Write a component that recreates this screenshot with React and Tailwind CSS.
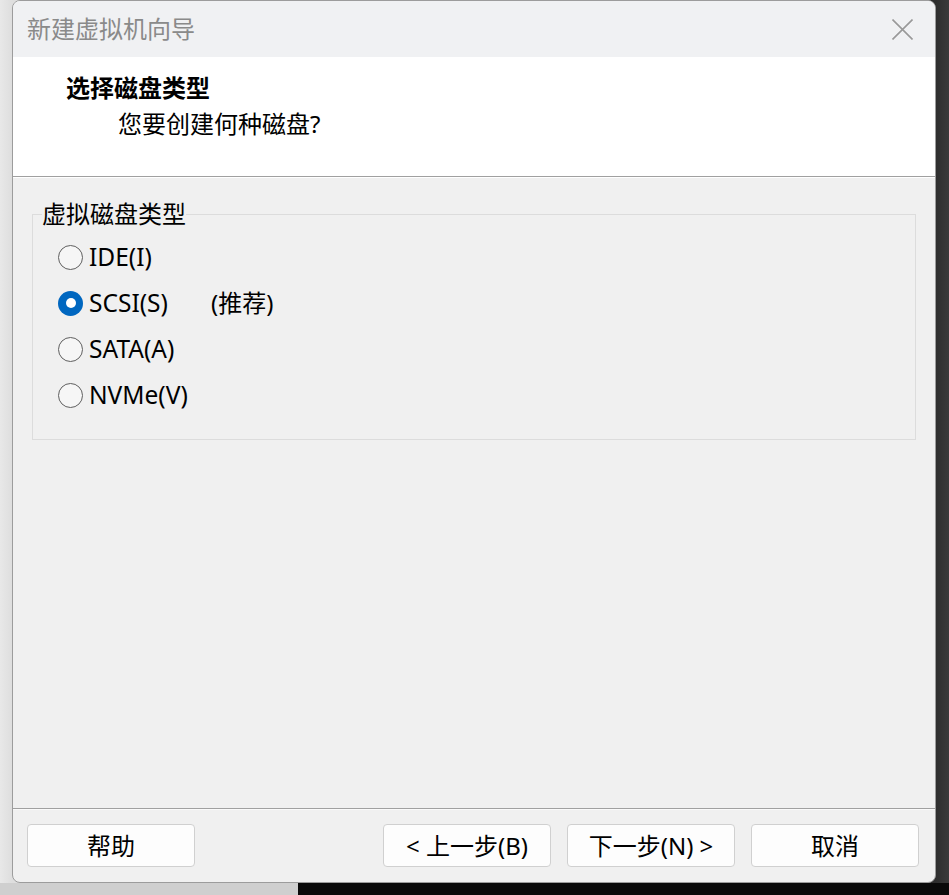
const diskTypes = [
  { id: "ide", label: "IDE(I)" },
  { id: "scsi", label: "SCSI(S)", note: "(推荐)", checked: true },
  { id: "sata", label: "SATA(A)" },
  { id: "nvme", label: "NVMe(V)" },
];

const uiFont = "font-['Noto_Sans','Noto_Sans_CJK_SC',sans-serif]";

const Radio = ({ checked }) =>
  checked ? (
    <span className="flex size-[25px] shrink-0 items-center justify-center rounded-full bg-[#0067c0]">
      <span className="size-[10px] rounded-full bg-white" />
    </span>
  ) : (
    <span className="size-[25px] shrink-0 rounded-full border-[1.5px] border-[#5f5f5f] bg-[#f6f6f6]" />
  );

const Button = ({ children }) => (
  <button className="flex h-[43px] w-[168px] items-center justify-center rounded-[4px] border border-[#d0d0d0] bg-[#fdfdfd] text-[24px] leading-none text-black">
    {children}
  </button>
);

export default function App() {
  return (
    <div className={`flex h-[895px] w-[949px] flex-col overflow-hidden ${uiFont}`}>
      <div className="flex h-[883px] bg-[linear-gradient(to_right,#e8e8e8_0,#dedede_12px,#dedede_298px,#2e2e2e_298px,#2e2e2e_936px,#3a3a3a_949px)]">
        <div className="w-[12px] shrink-0" />

        {/* wizard window */}
        <div className="flex w-[924px] flex-col overflow-hidden rounded-[8px] border border-[#9c9c9c] bg-[#f0f0f0]">
          {/* title bar */}
          <div className="flex h-[56px] shrink-0 items-center justify-between bg-[#f0f1f3] pl-[14px] pr-[22px]">
            <span className="text-[24px] leading-none text-[#8a8a8a]">新建虚拟机向导</span>
            <svg width="21" height="21" viewBox="0 0 21 21" className="text-[#999999]">
              <path d="M0.5 0.5 L20.5 20.5 M20.5 0.5 L0.5 20.5" stroke="currentColor" strokeWidth="1.6" fill="none" />
            </svg>
          </div>

          {/* page header */}
          <div className="flex h-[119px] shrink-0 flex-col bg-white pt-[13px]">
            <div className="pl-[53px] text-[24px] font-bold leading-[36px] text-black">选择磁盘类型</div>
            <div className="pl-[105px] text-[24px] leading-[36px] text-black">您要创建何种磁盘?</div>
          </div>
          <div className="h-[2px] shrink-0 border-t border-b border-t-[#a0a0a0] border-b-white" />

          {/* body */}
          <div className="flex-1 px-[19px] pt-[20px]">
            <fieldset className="border border-[#dcdcdc] pb-[21px] pl-[25px] pt-[4px]">
              <legend className="-ml-[16px] text-[24px] leading-[32px] text-black">虚拟磁盘类型</legend>
              {diskTypes.map((item) => (
                <div key={item.id} className="flex h-[46px] items-center">
                  <Radio checked={item.checked} />
                  <span className="ml-[6px] w-[122px] text-[24.5px] text-black">{item.label}</span>
                  {item.note && <span className="text-[24px] text-black">{item.note}</span>}
                </div>
              ))}
            </fieldset>
          </div>

          {/* footer */}
          <div className="h-[2px] shrink-0 border-t border-b border-t-[#a0a0a0] border-b-[#fafafa]" />
          <div className="flex h-[72px] shrink-0 items-start justify-between pl-[14px] pr-[16px] pt-[14px]">
            <Button>帮助</Button>
            <div className="flex gap-[16px]">
              <Button>&lt; 上一步(B)</Button>
              <Button>下一步(N) &gt;</Button>
              <Button>取消</Button>
            </div>
          </div>
        </div>

        <div className="flex-1" />
      </div>

      <div className="flex h-[12px]">
        <div className="w-[298px] bg-[#cfcfcf]" />
        <div className="flex-1 bg-[#0a0a0a]" />
      </div>
    </div>
  );
}
